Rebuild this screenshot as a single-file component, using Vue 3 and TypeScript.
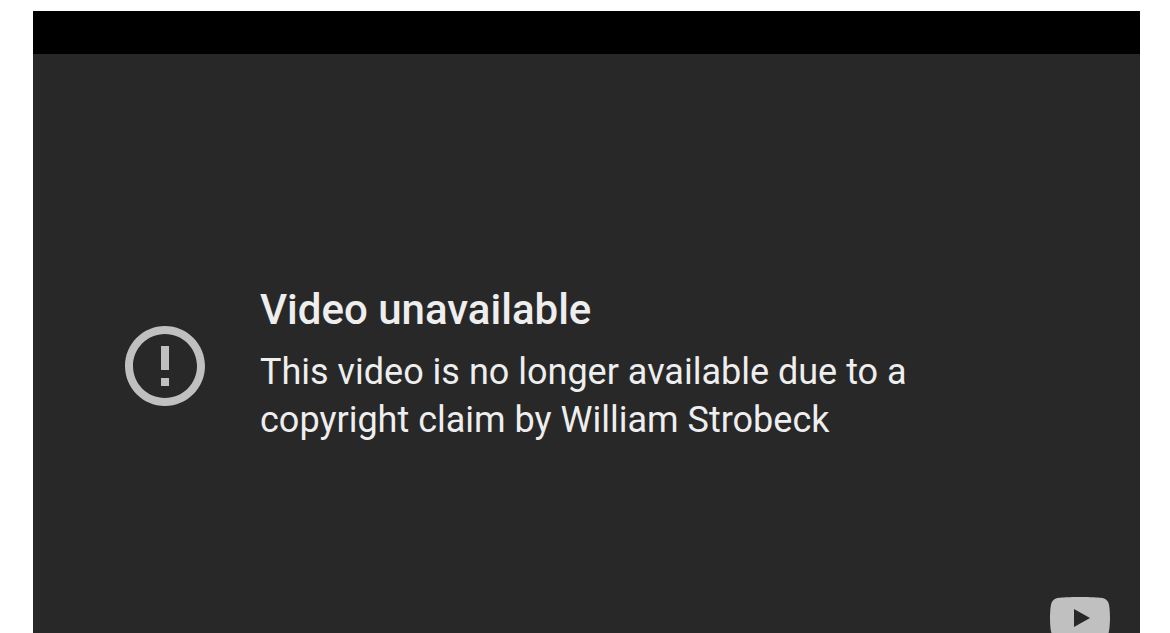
<script setup lang="ts">
const title = 'Video unavailable'
const reason = 'This video is no longer available due to a copyright claim by William Strobeck'
</script>

<template>
  <main class="page">
    <section class="player" aria-label="Video player">
      <div class="bar"></div>
      <div class="screen">
        <div class="message">
          <svg class="alert" viewBox="2 2 20 20" aria-hidden="true">
            <path d="M11 15h2v2h-2zm0-8h2v6h-2zm.99-5C6.47 2 2 6.48 2 12s4.470 10 9.990 10C17.520 22 22 17.520 22 12S17.520 2 11.990 2zM12 20c-4.420 0-8-3.580-8-8s3.580-8 8-8 8 3.580 8 8-3.580 8-8 8z" />
          </svg>
          <div class="copy">
            <h1>{{ title }}</h1>
            <p>{{ reason }}</p>
          </div>
        </div>
        <a class="logo" href="#" aria-label="Watch on YouTube">
          <svg viewBox="0 0 60 42" aria-hidden="true">
            <path class="logo-plate" d="M58.700 6.600C58 4 56 1.900 53.400 1.200 48.700 0 30 0 30 0S11.300 0 6.600 1.200C4 1.900 2 4 1.300 6.600 0 11.300 0 21 0 21s0 9.700 1.300 14.400C2 38 4 40.100 6.600 40.800 11.300 42 30 42 30 42s18.700 0 23.400-1.200C56 40.100 58 38 58.700 35.400 60 30.700 60 21 60 21s0-9.700-1.300-14.400z" />
            <path class="logo-play" d="M24 12l16 9-16 9z" />
          </svg>
        </a>
      </div>
    </section>
  </main>
</template>

<style>
body {
  margin: 0;
  background: #fff;
}
</style>

<style scoped>
.page {
  box-sizing: border-box;
  height: 100vh;
  padding: 11px 30px 0 33px;
  overflow: hidden;
  font-family: Roboto, "Liberation Sans", sans-serif;
}

.player {
  display: flex;
  flex-direction: column;
  height: 100%;
  background: #282828;
  color: #eee;
}

.bar {
  flex: none;
  height: 43px;
  background: #000;
}

.screen {
  position: relative;
  flex: 1;
  display: flex;
  align-items: center;
  padding: 0 92px;
}

.message {
  display: flex;
  align-items: center;
  gap: 55px;
  padding-top: 44px;
}

.alert {
  flex: none;
  width: 80px;
  height: 80px;
  fill: #c0c0c0;
}

.copy {
  max-width: 680px;
  padding-bottom: 6px;
}

h1 {
  margin: 0;
  font-size: 42px;
  font-weight: 500;
  line-height: 56px;
}

p {
  margin: 10px 0 0;
  font-size: 36px;
  line-height: 48px;
}

.logo {
  position: absolute;
  right: 30px;
  bottom: -6px;
  width: 60px;
  height: 42px;
}

.logo svg {
  display: block;
}

.logo-plate {
  fill: #c0c0c0;
}

.logo-play {
  fill: #282828;
}
</style>
